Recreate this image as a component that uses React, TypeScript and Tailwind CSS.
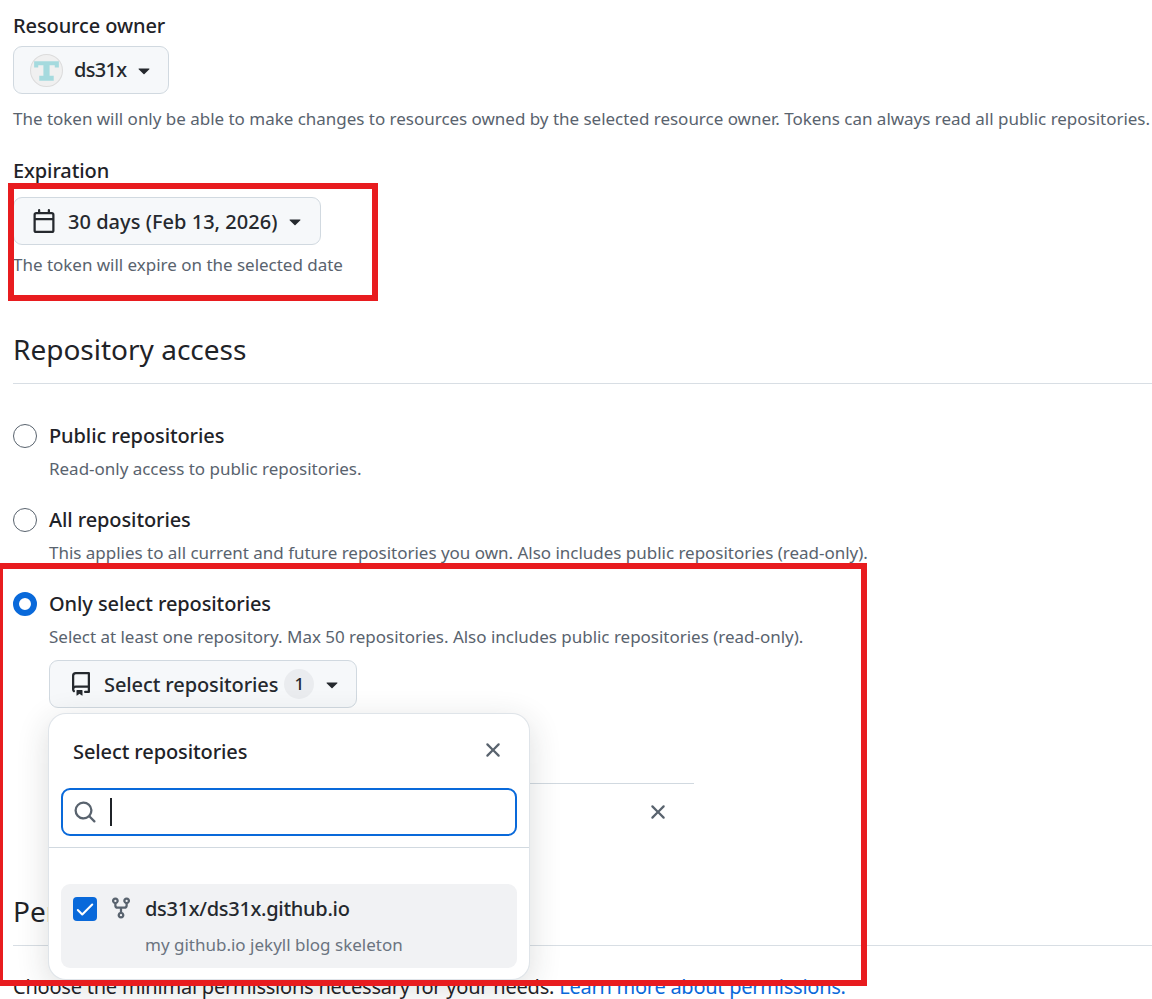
import React from "react";

const P = ({ d, className }: { d: string; className: string }) => (
  <svg viewBox="0 0 16 16" fill="currentColor" className={className}>
    <path d={d} />
  </svg>
);
const caret = "m4.427 7.427 3.396 3.396a.25.25 0 0 0 .354 0l3.396-3.396A.25.25 0 0 0 11.396 7H4.604a.25.25 0 0 0-.177.427Z";
const xIcon = "M3.72 3.72a.75.75 0 0 1 1.06 0L8 6.94l3.22-3.22a.749.749 0 0 1 1.275.326.749.749 0 0 1-.215.734L9.06 8l3.22 3.22a.749.749 0 0 1-.326 1.275.749.749 0 0 1-.734-.215L8 9.06l-3.22 3.22a.751.751 0 0 1-1.042-.018.751.751 0 0 1-.018-1.042L6.94 8 3.72 4.78a.75.75 0 0 1 0-1.06Z";
const calendar = "M4.75 0a.75.75 0 0 1 .75.75V2h5V.75a.75.75 0 0 1 1.5 0V2h1.25c.966 0 1.75.784 1.75 1.75v10.5A1.75 1.75 0 0 1 13.25 16H2.75A1.75 1.75 0 0 1 1 14.25V3.75C1 2.784 1.784 2 2.75 2H4V.75A.75.75 0 0 1 4.75 0ZM2.5 7.5v6.75c0 .138.112.25.25.25h10.5a.25.25 0 0 0 .25-.25V7.5Zm10.75-4H2.75a.25.25 0 0 0-.25.25V6h11V3.75a.25.25 0 0 0-.25-.25Z";
const repo = "M2 2.5A2.5 2.5 0 0 1 4.5 0h8.75a.75.75 0 0 1 .75.75v12.5a.75.75 0 0 1-.75.75h-2.5a.75.75 0 0 1 0-1.5h1.75v-2h-8a1 1 0 0 0-.714 1.7.75.75 0 1 1-1.072 1.05A2.495 2.495 0 0 1 2 11.5Zm10.5-1h-8a1 1 0 0 0-1 1v6.708A2.486 2.486 0 0 1 4.5 9h8ZM5 12.25a.25.25 0 0 1 .25-.25h3.5a.25.25 0 0 1 .25.25v3.25a.25.25 0 0 1-.4.2l-1.45-1.087a.249.249 0 0 0-.3 0L5.4 15.7a.25.25 0 0 1-.4-.2Z";
const search = "M10.68 11.74a6 6 0 0 1-7.922-8.982 6 6 0 0 1 8.982 7.922l3.04 3.04a.749.749 0 0 1-.326 1.275.749.749 0 0 1-.734-.215ZM11.5 7a4.499 4.499 0 1 0-8.997 0A4.499 4.499 0 0 0 11.5 7Z";
const fork = "M5 5.372v.878c0 .414.336.75.75.75h4.5a.75.75 0 0 0 .75-.75v-.878a2.25 2.25 0 1 1 1.5 0v.878a2.25 2.25 0 0 1-2.25 2.25h-1.5v2.128a2.251 2.251 0 1 1-1.5 0V8.5h-1.5A2.25 2.25 0 0 1 3.5 6.25v-.878a2.25 2.25 0 1 1 1.5 0ZM5 3.25a.75.75 0 1 0-1.5 0 .75.75 0 0 0 1.5 0Zm6.75.75a.75.75 0 1 0 0-1.5.75.75 0 0 0 0 1.5Zm-3 8.75a.75.75 0 1 0-1.5 0 .75.75 0 0 0 1.5 0Z";
const check = "M13.78 4.22a.75.75 0 0 1 0 1.06l-7.25 7.25a.75.75 0 0 1-1.06 0L2.22 9.28a.751.751 0 0 1 .018-1.042.751.751 0 0 1 1.042-.018L6 10.94l6.72-6.72a.75.75 0 0 1 1.06 0Z";

const Label = ({ children, className = "" }: { children: React.ReactNode; className?: string }) => (
  <div className={`text-[20px] leading-[26px] font-medium tracking-[-0.1px] text-[#1f2328] ${className}`}>{children}</div>
);
const Hint = ({ children, className = "" }: { children: React.ReactNode; className?: string }) => (
  <div className={`text-[17px] leading-[24px] tracking-[-0.02px] text-[#59636e] whitespace-nowrap ${className}`}>{children}</div>
);
const btn = "flex items-center h-[48px] rounded-[9px] border border-[#d1d9e0] bg-[#f6f8fa] text-[20px] font-medium tracking-[-0.1px] text-[#25292e] whitespace-nowrap";

const Radio = ({ label, hint, on, className = "" }: { label: string; hint: string; on?: boolean; className?: string }) => (
  <div className={`flex gap-[12px] ${className}`}>
    {on ? (
      <div className="mt-[1px] w-[24px] h-[24px] rounded-full border-[6px] border-[#0969da] bg-white shrink-0" />
    ) : (
      <div className="mt-[1px] w-[24px] h-[24px] rounded-full border border-[#59636e] bg-white shrink-0" />
    )}
    <div>
      <Label>{label}</Label>
      <Hint className="mt-[8px]">{hint}</Hint>
    </div>
  </div>
);

export default function App() {
  return (
    <div className="relative w-[1152px] h-[999px] overflow-hidden bg-white pl-[13px] pt-[13px] font-['Noto_Sans',sans-serif]">
      <Label>Resource owner</Label>
      <div className={`${btn} mt-[7px] w-[156px] pl-[16px]`}>
        <svg viewBox="0 0 32 32" className="w-[33px] h-[33px] shrink-0">
          <circle cx="16" cy="16" r="15.5" fill="#f0f0f0" stroke="#dcdcdc" />
          <path d="M4 7h24v6h-4v-2H19v10h4v5H9v-5h4V11H8v2H4Z" fill="#a5dade" />
        </svg>
        <span className="ml-[11px] tracking-[-0.7px]">ds31x</span>
        <P d={caret} className="ml-[6px] w-[24px] h-[24px] text-[#25292e]" />
      </div>
      <Hint className="mt-[13px]">
        The token will only be able to make changes to resources owned by the selected resource owner. Tokens can always read all public repositories.
      </Hint>

      <Label className="mt-[27px]">Expiration</Label>
      <div className={`${btn} mt-[13px] w-[308px] pl-[18px]`}>
        <P d={calendar} className="w-[24px] h-[24px] text-[#25292e]" />
        <span className="ml-[12px] pt-[2px] tracking-[0.03px]">30 days (Feb 13, 2026)</span>
        <P d={caret} className="ml-[6px] w-[24px] h-[24px] text-[#25292e]" />
      </div>
      <Hint className="mt-[8px]">The token will expire on the selected date</Hint>

      <h2 className="mt-[53px] text-[28px] leading-[38px] font-normal text-[#1f2328]">Repository access</h2>
      <div className="mt-[15px] border-t border-[#d8dee4]" />

      <Radio className="mt-[39px]" label="Public repositories" hint="Read-only access to public repositories." />
      <Radio className="mt-[26px]" label="All repositories" hint="This applies to all current and future repositories you own. Also includes public repositories (read-only)." />
      <Radio className="mt-[26px]" on label="Only select repositories" hint="Select at least one repository. Max 50 repositories. Also includes public repositories (read-only)." />

      <div className="ml-[36px]">
        <div className={`${btn} mt-[11px] w-[308px] pl-[19px]`}>
          <P d={repo} className="w-[24px] h-[24px] text-[#25292e]" />
          <span className="ml-[11px] pt-[2px]">Select repositories</span>
          <span className="ml-[6px] flex items-center justify-center w-[30px] h-[30px] rounded-full bg-[#eaecef] text-[17px] text-[#25292e]">1</span>
          <P d={caret} className="ml-[6px] w-[24px] h-[24px] text-[#25292e]" />
        </div>
        <div className="mt-[75px] w-[645px] border-t border-[#d1d9e0]">
          <div className="flex justify-end pr-[24px] pt-[16px]">
            <P d={xIcon} className="w-[24px] h-[24px] text-[#59636e]" />
          </div>
        </div>
      </div>

      <h2 className="mt-[68px] text-[28px] leading-[38px] font-normal text-[#1f2328]">Permissions</h2>
      <div className="mt-[15px] border-t border-[#d8dee4]" />
      <div className="mt-[28px] text-[20px] leading-[26px] tracking-[-0.22px] text-[#1f2328] whitespace-nowrap">
        Choose the minimal permissions necessary for your needs. <span className="text-[#0969da] tracking-[-0.25px]">Learn more about permissions.</span>
      </div>

      {/* Popover */}
      <div className="absolute left-[48px] top-[713px] w-[482px] h-[267px] rounded-[18px] bg-white border border-[#d1d9e0]/70 shadow-[0_8px_32px_rgba(37,41,46,0.16)]">
        <div className="flex items-center justify-between h-[74px] pl-[24px] pr-[24px]">
          <span className="pt-[2px] text-[20px] font-medium tracking-[-0.1px] text-[#1f2328]">Select repositories</span>
          <P d={xIcon} className="-mt-[2px] w-[24px] h-[24px] text-[#59636e]" />
        </div>
        <div className="mx-[12px] flex items-center h-[48px] rounded-[9px] border-2 border-[#0969da] bg-white pl-[10px]">
          <P d={search} className="w-[24px] h-[24px] text-[#59636e]" />
          <div className="ml-[13px] w-[2px] h-[28px] bg-[#1f2328]" />
        </div>
        <div className="mt-[11px] border-t border-[#d1d9e0]" />
        <div className="mx-[12px] mt-[36px] h-[84px] rounded-[9px] bg-[#f1f2f4] flex pl-[12px] pt-[12px]">
          <div className="w-[24px] h-[24px] rounded-[4px] bg-[#0969da] flex items-center justify-center shrink-0 mt-[1px]">
            <P d={check} className="w-[22px] h-[22px] text-white" />
          </div>
          <P d={fork} className="ml-[12px] w-[24px] h-[24px] text-[#59636e]" />
          <div className="ml-[12px]">
            <div className="text-[20px] leading-[26px] font-medium tracking-[-0.3px] text-[#25292e]">ds31x/ds31x.github.io</div>
            <div className="mt-[11px] text-[17px] leading-[24px] text-[#6b7480]">my github.io jekyll blog skeleton</div>
          </div>
        </div>
      </div>

      {/* Red annotations */}
      <div className="absolute left-[8px] top-[183px] w-[370px] h-[118px] border-[6px] border-[#e81c1f]" />
      <div className="absolute left-[-3px] top-[563px] w-[870px] h-[423px] border-[6px] border-[#e81c1f]" />
    </div>
  );
}
